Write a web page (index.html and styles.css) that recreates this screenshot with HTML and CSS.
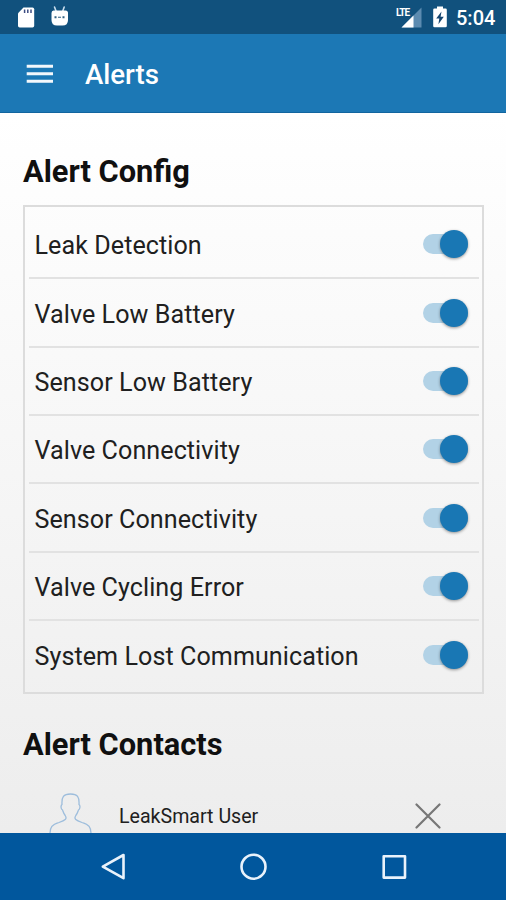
FILE: index.html
```html
<!DOCTYPE html>
<html lang="en">
<head>
<meta charset="utf-8">
<title>Alerts</title>
<link rel="stylesheet" href="styles.css">
</head>
<body>
<div class="screen">
  <div class="status">
    <svg class="status-icons" width="80" height="34" viewBox="0 0 80 34">
      <path fill="#fff" d="M23.5 7.5H32.5Q34.2 7.5 34.2 9.2V25.8Q34.2 27.5 32.5 27.5H19.7Q18 27.5 18 25.8V13.2Z"/>
      <path stroke="#3c4c82" stroke-width="1.5" d="M24.6 9.5V13M27.8 9.5V13M31 9.5V13"/>
      <path stroke="#c9deee" stroke-width="1.6" stroke-linecap="round" d="M54.5 7L56 11M64.2 7L62.800 11"/>
      <path fill="#fff" d="M53.500 10.500H65.500Q68 10.500 68 13V20Q68 25.500 62.500 25.500H57Q51.500 25.500 51.500 20V13Q51.500 10.500 53.500 10.500Z"/>
      <path fill="#326282" d="M54.500 16.200h2v2h-2zM62.500 16.200h2v2h-2zM58 16.800h3v1h-3z"/>
    </svg>
    <div class="status-right">
      <div class="signal">
        <svg width="28" height="34" viewBox="0 0 28 34">
          <path fill="#5c8bb0" d="M26.500 7.500V27.500H6.500Z"/>
          <path fill="#fff" d="M18.500 15.500V27.500H6.500Z"/>
        </svg>
        <span class="lte">LTE</span>
      </div>
      <svg class="battery" width="14" height="22" viewBox="0 0 14 22">
        <path fill="#fff" d="M4 0.500H10V2.500H12.500Q13.800 2.500 13.800 3.800V20Q13.800 21.300 12.500 21.300H1.500Q0.200 21.300 0.200 20V3.800Q0.200 2.500 1.500 2.500H4Z"/>
        <path fill="#15456f" d="M8.500 5.500L3.200 12.500H6.300L5.400 18.300L10.800 10.800H7.600Z"/>
      </svg>
      <span class="clock">5:04</span>
    </div>
  </div>
  <header class="bar">
    <svg width="28" height="20" viewBox="0 0 28 20"><path stroke="#f3f8fc" stroke-width="3" d="M.7 2.200H27M.7 9.800H27M.7 17.300H27"/></svg>
    <span class="bar-title">Alerts</span>
  </header>
  <main class="content">
    <h2 class="heading config">Alert Config</h2>
    <div class="card">
      <div class="row"><span>Leak Detection</span><i class="switch"></i></div>
      <div class="row"><span>Valve Low Battery</span><i class="switch"></i></div>
      <div class="row"><span>Sensor Low Battery</span><i class="switch"></i></div>
      <div class="row"><span>Valve Connectivity</span><i class="switch"></i></div>
      <div class="row"><span>Sensor Connectivity</span><i class="switch"></i></div>
      <div class="row"><span>Valve Cycling Error</span><i class="switch"></i></div>
      <div class="row"><span>System Lost Communication</span><i class="switch"></i></div>
    </div>
    <h2 class="heading contacts">Alert Contacts</h2>
    <div class="contact">
      <svg width="46" height="42" viewBox="0 0 46 42"><path fill="none" stroke="#9dbddc" stroke-width="1.300" d="M2 42C2 35 4 32.500 11 30.500C17 28.500 19.500 27 17.200 23.500C15.200 21 15 19 14.500 18C12.800 17 12.500 13.500 14 12.500C13.500 5 15.500 2 22.500 2C29.500 2 31.500 5 31 12.500C32.500 13.500 32.200 17 30.500 18C30 19 29.800 21 27.800 23.500C25.500 27 28 28.500 34 30.500C41 32.500 43 35 43 42"/></svg>
      <span class="name">LeakSmart User</span>
      <svg class="remove" width="26" height="26" viewBox="0 0 26 26"><path stroke="#777" stroke-width="2.200" stroke-linecap="round" d="M1.500 1.500L24.500 24.500M24.500 1.500L1.500 24.500"/></svg>
    </div>
  </main>
  <nav class="nav">
    <svg width="506" height="67" viewBox="0 0 506 67" fill="none" stroke="#e9f2fb" stroke-width="2.600" stroke-linejoin="round">
      <path d="M123.500 22V45.200L102.800 33.600Z"/>
      <circle cx="253.500" cy="33.700" r="12"/>
      <rect x="383.700" y="23.300" width="21.300" height="21.300"/>
    </svg>
  </nav>
</div>
</body>
</html>
```
FILE: styles.css
```css
* { box-sizing: border-box; }
body { margin: 0; font-family: Roboto, "Liberation Sans", sans-serif; }
.screen { width: 506px; height: 900px; display: flex; flex-direction: column; overflow: hidden; }
.status { height: 34px; flex: none; background: #11517d; display: flex; justify-content: space-between; }
.status-right { display: flex; align-items: center; padding-right: 12px; color: #fff; }
.signal { position: relative; width: 28px; height: 34px; margin-right: 10px; }
.signal svg { display: block; }
.lte { position: absolute; left: 1px; top: 7px; font-size: 10px; line-height: 11px; font-weight: 700; letter-spacing: -1px; }
.battery { margin-right: 9px; }
.clock { font-size: 20px; font-weight: 500; line-height: 34px; width: 38px; white-space: nowrap; padding-top: 2px; }
.bar { height: 79px; flex: none; background: #1c78b5; border-bottom: 1px solid #11659f; display: flex; align-items: center; padding: 1px 0 0 26px; }
.bar-title { margin-left: 31px; padding-top: 1px; font-size: 27.6px; font-weight: 500; color: #fff; }
.content { flex: 1; min-height: 0; overflow: hidden; padding: 0 22px 0 23px; background: linear-gradient(#fff, #ededed); }
.heading { margin: 0; font-weight: 700; font-size: 30.8px; line-height: 36px; color: #101010; }
.config { padding-top: 41px; }
.card { margin-top: 15px; height: 489px; border: 2px solid #dcdcdc; padding: 4px 3px 4px 4px; display: flex; flex-direction: column; }
.row { flex: 0 0 68.35px; display: flex; align-items: center; justify-content: space-between; padding: 0 11px 0 5.5px; border-bottom: 2px solid #e2e2e2; font-size: 25.1px; letter-spacing: .07px; color: #202020; white-space: nowrap; }
.row span { padding-top: 3px; }
.row:last-child { border-bottom: 0; }
.switch { width: 45px; height: 20px; border-radius: 10px; background: #b2d2e6; display: flex; align-items: center; justify-content: flex-end; }
.switch::after { content: ""; width: 28px; height: 28px; border-radius: 50%; background: #1977b4; box-shadow: 0 1px 3px rgba(0, 0, 0, .4); flex: none; }
.contacts { margin-top: 33px; }
.contact { display: flex; align-items: flex-start; padding: 29px 43px 0 25px; }
.name { margin-left: 25px; margin-top: 13px; font-size: 19.6px; line-height: 24px; color: #202020; }
.remove { margin-left: auto; margin-top: 11px; }
.nav { height: 67px; flex: none; background: #01579d; }
.nav svg { display: block; }
```
